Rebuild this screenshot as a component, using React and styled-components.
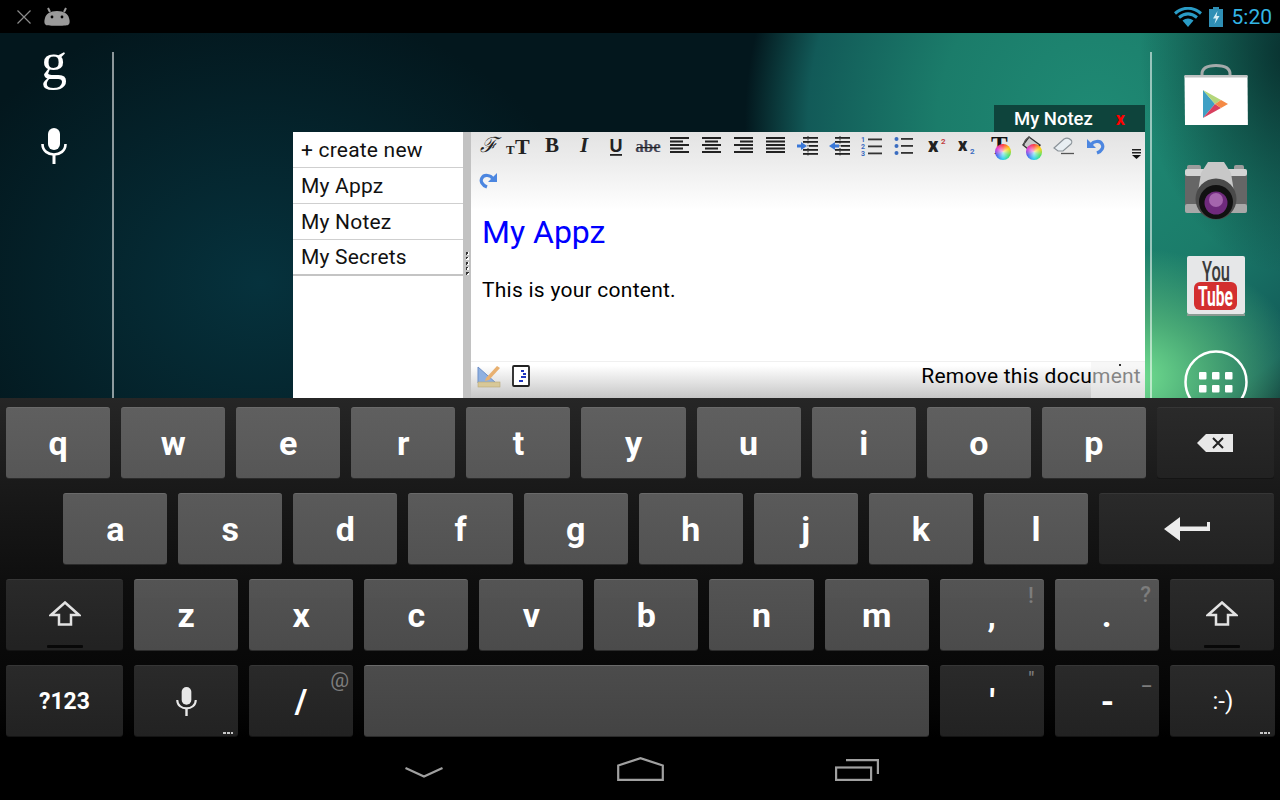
import React from "react";
import styled, { createGlobalStyle } from "styled-components";

const GlobalStyle = createGlobalStyle`
  html, body { margin: 0; padding: 0; background: #000; }
  body { font-family: Roboto, "Liberation Sans", sans-serif; }
`;

const Screen = styled.div`
  width: 1280px;
  height: 800px;
  display: flex;
  flex-direction: column;
  overflow: hidden;
`;

/* status bar */
const StatusBar = styled.div`
  height: 33px;
  background: #000;
  display: flex;
  align-items: center;
  padding: 0 8px 0 17px;
`;
const Time = styled.span`
  color: #33b5e5;
  font-size: 21px;
  margin-left: 9px;
`;
const Push = styled.div`
  flex: 1;
`;

/* desktop */
const Desktop = styled.div`
  position: relative;
  height: 365px;
  display: flex;
  overflow: hidden;
  background:
    radial-gradient(ellipse 175px 130px at 1130px 345px, rgba(116, 226, 146, 1) 0%, rgba(90, 190, 125, 0.75) 45%, rgba(60, 150, 110, 0) 100%),
    radial-gradient(ellipse 150px 220px at 1290px 20px, rgba(6, 38, 38, 0.85) 0%, rgba(6, 38, 38, 0) 100%),
    radial-gradient(ellipse 350px 370px at 1095px 90px, #1f8a74 0%, #1b7c6a 45%, #125a58 82%, rgba(8, 50, 56, 0) 100%),
    radial-gradient(ellipse 340px 280px at 260px 250px, #06323d 0%, rgba(6, 50, 61, 0) 100%),
    #03171d;
`;
const LeftRail = styled.div`
  width: 108px;
  margin-right: 4px;
  display: flex;
  flex-direction: column;
  align-items: center;
  padding-top: 1px;
`;
const GoogleG = styled.span`
  font-family: "Liberation Serif", serif;
  font-size: 52px;
  line-height: 56px;
  color: #fff;
  height: 94px;
`;
const Divider = styled.div`
  width: 2px;
  margin-top: 19px;
  background: rgba(255, 255, 255, 0.55);
`;
const Wallpaper = styled.div`
  flex: 1;
`;
const RightRail = styled.div`
  width: 128px;
  padding-top: 14.5px;
  display: flex;
  flex-direction: column;
`;
const RailSlot = styled.div`
  flex: 0 0 95.5px;
  display: flex;
  align-items: center;
  justify-content: center;
`;

/* notes window */
const NoteWindow = styled.div`
  position: absolute;
  left: 293px;
  top: 72px;
  width: 852px;
  bottom: 0;
  display: flex;
  flex-direction: column;
`;
const WindowTab = styled.div`
  align-self: flex-end;
  width: 151px;
  height: 27px;
  background: #0e443c;
  display: flex;
  align-items: center;
  padding-left: 20px;
  box-sizing: border-box;
  color: #fff;
  font-size: 18.5px;
  font-weight: 500;
`;
const CloseX = styled.span`
  color: #f00;
  font-weight: 700;
  font-size: 18px;
  margin-left: 23px;
`;
const WindowBody = styled.div`
  flex: 1;
  display: flex;
  min-height: 0;
`;
const ListPane = styled.div`
  width: 170px;
  background: #fff;
`;
const ListRow = styled.div`
  height: 36px;
  box-sizing: border-box;
  padding-left: 8px;
  display: flex;
  align-items: center;
  border-bottom: ${(p) => (p.$last ? "2px solid #c4c4c4" : "1px solid #cfcfcf")};
  font-size: 21px;
  letter-spacing: 0.2px;
  color: #111;
`;
const Splitter = styled.div`
  width: 8px;
  background: #c2c2c2;
  display: flex;
  flex-direction: column;
  align-items: center;
  gap: 2px;
  padding-top: 120px;
  box-sizing: border-box;
`;
const SplitDot = styled.i`
  width: 3px;
  height: 3px;
  background: linear-gradient(135deg, #333 50%, #fff 50%);
`;
const Editor = styled.div`
  flex: 1;
  display: flex;
  flex-direction: column;
  background: #fff;
  min-width: 0;
`;
const Toolbar = styled.div`
  height: 78px;
  box-sizing: border-box;
  padding-left: 1px;
  background: linear-gradient(#e3e3e3, #ededed 40%, #fff);
  display: flex;
  flex-direction: column;
  gap: 6px;
`;
const ToolRow = styled.div`
  display: flex;
  align-items: center;
  height: 28px;
`;
const ToolButton = styled.div`
  position: relative;
  width: 32px;
  height: 28px;
  display: flex;
  align-items: center;
  justify-content: center;
`;
const ColorWheel = styled.i`
  position: absolute;
  left: ${(p) => p.$left}px;
  top: 12px;
  width: 16px;
  height: 16px;
  border-radius: 50%;
  background:
    radial-gradient(circle, rgba(255, 255, 255, 0.75) 0%, rgba(255, 255, 255, 0) 70%),
    conic-gradient(#ff3030, #ffd000, #40e060, #20d0f0, #4060f0, #e030d0, #ff3030);
`;
const DropMark = styled.div`
  margin-left: 20px;
  margin-top: 14px;
`;
const Content = styled.div`
  flex: 1;
  padding-left: 11px;
`;
const DocTitle = styled.div`
  font-size: 32px;
  line-height: 44px;
  color: #00f;
`;
const DocText = styled.div`
  margin-top: 24px;
  font-size: 21px;
  line-height: 24px;
  color: #000;
  letter-spacing: 0.25px;
`;
const Footer = styled.div`
  position: relative;
  height: 37px;
  box-sizing: border-box;
  border-top: 1px solid #f0f0f0;
  background: linear-gradient(#fff 10%, #c6c6c6);
  display: flex;
  align-items: center;
  padding: 0 4px 8px 2px;
`;
const RemoveLink = styled.span`
  margin-left: auto;
  font-size: 21px;
  letter-spacing: 0.25px;
  color: #000;
`;
const FadeOver = styled.div`
  position: absolute;
  right: 0;
  top: 0;
  bottom: 0;
  width: 54px;
  background: rgba(240, 240, 240, 0.55);
`;
const ScrollTick = styled.i`
  position: absolute;
  right: 24px;
  top: 2px;
  width: 2px;
  height: 2px;
  background: #333;
`;

/* keyboard */
const Keyboard = styled.div`
  height: 340px;
  box-sizing: border-box;
  padding-top: 9px;
  background: linear-gradient(#262626, #1a1a1a 25%, #0e0e0e 55%, #050505 90%, #000);
  display: flex;
  flex-direction: column;
  gap: 15px;
`;
const KeyRow = styled.div`
  display: flex;
  gap: 11px;
  padding-left: ${(p) => p.$inset}px;
`;
const Key = styled.div`
  position: relative;
  flex: 0 0 ${(p) => p.$w}px;
  height: 71px;
  box-sizing: border-box;
  border-radius: 3px;
  display: flex;
  align-items: center;
  justify-content: center;
  color: #fff;
  font-size: ${(p) => p.$size || 34}px;
  font-weight: ${(p) => p.$weight || 700};
  background: linear-gradient(rgba(255, 255, 255, 0.03), rgba(0, 0, 0, 0.04)), ${(p) => (p.$dark ? "#232323" : p.$tone)};
  border-top: 1px solid ${(p) => (p.$dark ? "#363636" : "#6a6a6a")};
  box-shadow: 0 1px 0 ${(p) => (p.$dark ? "#141414" : "#2b2b2b")};
`;
const Hint = styled.span`
  position: absolute;
  top: ${(p) => p.$top}px;
  right: ${(p) => p.$right}px;
  color: #7d7d7d;
  font-size: ${(p) => p.$size || 22}px;
  line-height: 1;
  font-weight: ${(p) => p.$weight || 500};
`;
const ShiftBar = styled.i`
  position: absolute;
  left: 50%;
  bottom: 2px;
  width: 36px;
  height: 3px;
  margin-left: -18px;
  border-radius: 1px;
  background: #080808;
`;
const MoreDots = styled.i`
  position: absolute;
  right: 5px;
  bottom: 2px;
  width: 10px;
  height: 2px;
  background: repeating-linear-gradient(90deg, #c8c8c8 0 3px, transparent 3px 4px);
`;

/* nav bar */
const NavBar = styled.div`
  flex: 1;
  background: #000;
  display: flex;
  justify-content: center;
  align-items: center;
  padding-bottom: 1px;
`;
const NavButton = styled.div`
  width: 216px;
  display: flex;
  justify-content: center;
  margin-top: ${(p) => p.$drop || 0}px;
  padding-left: ${(p) => p.$nudge || 0}px;
  box-sizing: border-box;
`;

/* drawings */
const AndroidHead = () => (
  <svg width="26" height="20" viewBox="0 0 26 20" style={{ marginLeft: 13 }}>
    <path d="M2 18c-2-1-2-4-1-7 1-4 5-7 12-7s11 3 12 7c1 3 1 6-1 7-2 1-20 1-22 0z" fill="#9a9a9a" />
    <path d="M6 5 4 1M20 5l2-4" stroke="#9a9a9a" strokeWidth="2" />
    <circle cx="8" cy="10" r="1.4" fill="#000" />
    <circle cx="18" cy="10" r="1.4" fill="#000" />
  </svg>
);

const CloseMark = () => (
  <svg width="14" height="14" viewBox="0 0 14 14">
    <path d="M0.5 0.5 13.5 13.5M13.5 0.5 0.5 13.5" stroke="#8c8c8c" strokeWidth="1.2" />
  </svg>
);

const Wifi = () => (
  <svg width="28" height="20" viewBox="0 0 28 20">
    <g fill="none" stroke="#2a9cc6" strokeWidth="3">
      <path d="M1 6.5c8-7 18-7 26 0" />
      <path d="M5 10.5c6-4.800 12-4.800 18 0" />
    </g>
    <path d="M8.500 13.500c3.500-2.800 7.500-2.800 11 0L14 20z" fill="#2a9cc6" />
  </svg>
);

const Battery = () => (
  <svg width="14" height="20" viewBox="0 0 14 20" style={{ marginLeft: 7 }}>
    <path d="M4 0h6v2h4v18H0V2h4z" fill="#2f8fb5" />
    <path d="M8.500 4 4 11.500h3L5.500 17 10.500 9H7.500z" fill="#d8eef6" />
  </svg>
);

const PlayBag = () => (
  <svg width="64" height="62" viewBox="0 0 64 62">
    <path d="M18 16V10C18 3 24 1.500 32 1.500S46 3 46 10v6" fill="none" stroke="#a4aaaa" strokeWidth="3" />
    <path d="M0.500 12h63l.4 49H1z" fill="#fff" />
    <rect x="0.500" y="11" width="63" height="2.500" fill="#bfc2c2" />
    <path d="M19 26v28l12-14z" fill="#3fa0c4" />
    <path d="M19 26 37 36l-6 4z" fill="#b4d67a" />
    <path d="M19 54 37 44l-6-4z" fill="#d8405f" />
    <path d="M37 36 44 40l-7 4-6-4z" fill="#f58a45" />
  </svg>
);

const Camera = () => (
  <svg width="64" height="58" viewBox="0 0 64 58">
    <rect x="3" y="3" width="14" height="6" rx="2" fill="#9c9c9c" />
    <rect x="50" y="3" width="10" height="6" rx="2" fill="#9c9c9c" />
    <rect x="1" y="7" width="62" height="44" rx="3" fill="#666" />
    <rect x="1" y="7" width="62" height="7" rx="2" fill="#d4d4d4" />
    <rect x="1" y="42" width="62" height="9" rx="2" fill="#a8a8a8" />
    <path d="M24 0h16l7 11 4 25H13l4-25z" fill="#c8c8c8" />
    <circle cx="32" cy="37" r="20.500" fill="#4a4a4a" />
    <circle cx="32" cy="40" r="17" fill="#111" />
    <circle cx="32" cy="41" r="11.500" fill="#6f2a7c" />
    <circle cx="32" cy="38" r="7" fill="#a565ad" />
  </svg>
);

const YouTube = () => (
  <svg width="60" height="60" viewBox="0 0 60 60">
    <rect x="1" y="0" width="58" height="58" rx="2" fill="#e6e7e8" />
    <rect x="1" y="58" width="58" height="2" fill="#8b9a92" />
    <text x="30" y="25" textAnchor="middle" fontFamily="Roboto, sans-serif" fontWeight="500" fontSize="27" fill="#3a3a3a" textLength="28" lengthAdjust="spacingAndGlyphs">You</text>
    <rect x="8" y="26" width="43" height="28" rx="6" fill="#d32f2f" />
    <text x="29.500" y="50" textAnchor="middle" fontFamily="Roboto, sans-serif" fontWeight="700" fontSize="27" fill="#fff" textLength="35" lengthAdjust="spacingAndGlyphs">Tube</text>
  </svg>
);

const AppsButton = () => (
  <svg width="64" height="64" viewBox="0 0 64 64">
    <circle cx="32" cy="32" r="30.500" fill="none" stroke="#fff" strokeWidth="2.500" />
    {[15, 28, 41].map((x) =>
      [22, 35].map((y) => <rect key={`${x}-${y}`} x={x} y={y} width="7.500" height="7.500" rx="1" fill="#fff" />)
    )}
  </svg>
);

const MicGlyph = ({ w = 26, h = 36, color = "#fff" }) => (
  <svg width={w} height={h} viewBox="0 0 26 36">
    <rect x="7" y="0" width="12" height="22" rx="6" fill={color} />
    <path d="M1.500 16c0 14 23 14 23 0" fill="none" stroke={color} strokeWidth="2.600" />
    <rect x="11.500" y="26" width="3" height="10" fill={color} />
  </svg>
);

const Lines = ({ rows }) => (
  <svg width="20" height="18" viewBox="0 0 20 18">
    {rows.map(([x, w], i) => (
      <rect key={i} x={x} y={i * 3.500} width={w} height="2" fill="#222" />
    ))}
  </svg>
);

const IndentIcon = ({ flip }) => (
  <svg width="24" height="20" viewBox="0 0 24 20">
    <path d="M12 0v20" stroke="#333" strokeWidth="1" strokeDasharray="1.500 1.500" />
    {[2, 6, 10, 14, 18].map((y, i) => (
      <rect key={y} x={i === 2 ? 13 : 7} y={y - 1} width={i === 2 ? 9 : 15} height="1.800" fill="#222" />
    ))}
    <path d={flip ? "M1 10 7 6v2.500h4v3H7V14z" : "M11 10 5 6v2.500H1v3h4V14z"} fill="#3a78d8" />
  </svg>
);

const NumberList = () => (
  <svg width="22" height="20" viewBox="0 0 22 20">
    {["1", "2", "3"].map((n, i) => (
      <g key={n}>
        <text x="0" y={6 + i * 7} fontSize="7" fontWeight="700" fontFamily="Roboto, sans-serif" fill="#3a6cc0">{n}</text>
        <rect x="7" y={2.500 + i * 7} width="14" height="1.800" fill="#333" />
      </g>
    ))}
  </svg>
);

const BulletList = () => (
  <svg width="20" height="20" viewBox="0 0 20 20">
    {[3, 10, 17].map((y) => (
      <g key={y}>
        <circle cx="2.500" cy={y} r="2" fill="#3a6cc0" />
        <rect x="7" y={y - 1} width="12" height="1.800" fill="#333" />
      </g>
    ))}
  </svg>
);

const ScriptIcon = ({ mark, color, x, markX, markY, size, base }) => (
  <svg width="24" height="20" viewBox="0 0 24 20">
    <text x={x} y={base} fontSize={size} fontWeight="900" fontFamily="Roboto, sans-serif" fill="#222">x</text>
    <text x={markX} y={markY} fontSize="8" fontWeight="700" fontFamily="Roboto, sans-serif" fill={color}>{mark}</text>
  </svg>
);

const TextColor = () => (
  <>
    <svg width="22" height="24" viewBox="0 0 22 24">
      <text x="2" y="20" fontSize="25" fontWeight="700" fontFamily='"Liberation Serif", serif' fill="#111">T</text>
    </svg>
    <ColorWheel $left={11} />
  </>
);

const FillColor = () => (
  <>
    <svg width="24" height="24" viewBox="0 0 24 24">
      <path d="M9 3 20 11l-7 8L3 11z" fill="#c9c9c9" stroke="#333" strokeWidth="1.400" />
      <path d="M4 11c0-4 3-7 6-8" fill="none" stroke="#555" strokeWidth="1.300" />
    </svg>
    <ColorWheel $left={10} />
  </>
);

const Eraser = () => (
  <svg width="22" height="18" viewBox="0 0 22 18">
    <path d="M1 11 11 2c2-1 5-1 7 1 1 1 1 3 0 4l-8 7H5z" fill="#e8eef2" stroke="#8a9298" strokeWidth="1.200" />
    <path d="M8 16.500h13" stroke="#555" strokeWidth="1.300" />
  </svg>
);

const CurveArrow = ({ flip }) => (
  <svg width="18" height="18" viewBox="0 0 18 18" style={flip ? { transform: "scaleX(-1)" } : undefined}>
    <path d="M4 8c2-4 9-5 11-1 2 3 0 7-5 9" fill="none" stroke="#4c86e0" strokeWidth="3.200" />
    <path d="M0 2v9h9z" fill="#4c86e0" />
  </svg>
);

const DropDown = () => (
  <svg width="9" height="10" viewBox="0 0 9 10">
    <rect x="0" y="0" width="9" height="1.500" fill="#222" />
    <rect x="0" y="3" width="9" height="1.500" fill="#222" />
    <path d="M0 6h9L4.500 10z" fill="#111" />
  </svg>
);

const RulerPencil = () => (
  <svg width="24" height="24" viewBox="0 0 24 24">
    <path d="M1 3v16h18z" fill="#8fb0e0" stroke="#6d8fc8" strokeWidth="1" />
    <path d="M9 14 20 2l3 2-11 12-4 1z" fill="#e8b070" />
    <rect x="1" y="18" width="22" height="5" fill="#d8c898" stroke="#b8a878" strokeWidth="0.600" />
  </svg>
);

const Outline = () => (
  <svg width="18" height="22" viewBox="0 0 18 22">
    <rect x="1" y="1" width="16" height="20" rx="1" fill="#fff" stroke="#222" strokeWidth="1.800" />
    <path d="M9 6h3M11 9h3M9 12h5M7 16h4" stroke="#1f35c0" strokeWidth="1.800" />
  </svg>
);

const ShiftArrow = () => (
  <svg width="32" height="25" viewBox="0 0 32 25" style={{ marginTop: -3 }}>
    <path d="M16 1.500 30 14h-8v9.500H10V14H2z" fill="none" stroke="#e2e2e2" strokeWidth="2.500" />
  </svg>
);

const Backspace = () => (
  <svg width="36" height="18" viewBox="0 0 36 18">
    <path d="M9 0h27v18H9L0 9z" fill="#e8e8e8" />
    <path d="M16 4l10 10M26 4 16 14" stroke="#222" strokeWidth="2" />
  </svg>
);

const EnterArrow = () => (
  <svg width="46" height="24" viewBox="0 0 46 24">
    <path d="M16 0V9.500H43V5h3v9H16v10L0 12z" fill="#ececec" />
  </svg>
);

const BackIcon = () => (
  <svg width="38" height="11" viewBox="0 0 38 11">
    <path d="M0.500 1 19 9.500 37.500 1" fill="none" stroke="#a0a0a0" strokeWidth="2.200" />
  </svg>
);
const HomeIcon = () => (
  <svg width="47" height="24" viewBox="0 0 47 24">
    <path d="M1.200 8.500 23.500 1.200 45.800 8.500V22.800H1.200z" fill="none" stroke="#a0a0a0" strokeWidth="2.200" />
  </svg>
);
const RecentsIcon = () => (
  <svg width="44" height="22" viewBox="0 0 44 22">
    <rect x="1.100" y="8.500" width="35" height="12.400" fill="none" stroke="#a0a0a0" strokeWidth="2.200" />
    <path d="M11 1.100h31.900V15" fill="none" stroke="#a0a0a0" strokeWidth="2.200" />
  </svg>
);

const align = {
  left: [[0, 19], [0, 13], [0, 19], [0, 13], [0, 19]],
  center: [[0, 19], [3, 13], [0, 19], [3, 13], [0, 19]],
  right: [[0, 19], [6, 13], [0, 19], [6, 13], [0, 19]],
  full: [[0, 19], [0, 19], [0, 19], [0, 19], [0, 19]],
};

const TextTool = ({ children, size, italic, weight, line, strike, color = "#222", family }) => (
  <svg width="30" height="26" viewBox="0 0 30 26">
    <text
      x="15"
      y="19"
      textAnchor="middle"
      fontSize={size}
      fontStyle={italic ? "italic" : "normal"}
      fontWeight={weight || 700}
      fontFamily={family || '"Liberation Serif", serif'}
      fill={color}
    >
      {children}
    </text>
    {line && <rect x="9" y="21" width="12" height="1.800" fill="#222" />}
    {strike && <rect x="4" y="14" width="22" height="1.200" fill="#222" />}
  </svg>
);

const toolIcons = [
  <TextTool key="font" size="21" italic weight="400" family='"DejaVu Serif", "Liberation Serif", serif'>ℱ</TextTool>,
  <svg key="size" width="30" height="26" viewBox="0 0 30 26">
    <text x="1" y="21" fontSize="13" fontWeight="700" fontFamily='"Liberation Serif", serif' fill="#222">T</text>
    <text x="10" y="21" fontSize="22" fontWeight="700" fontFamily='"Liberation Serif", serif' fill="#222">T</text>
  </svg>,
  <TextTool key="b" size="21" weight="700">B</TextTool>,
  <TextTool key="i" size="21" italic>I</TextTool>,
  <TextTool key="u" size="18" line family="Liberation Sans, sans-serif">U</TextTool>,
  <TextTool key="s" size="17" strike color="#445">abe</TextTool>,
  <Lines key="al" rows={align.left} />,
  <Lines key="ac" rows={align.center} />,
  <Lines key="ar" rows={align.right} />,
  <Lines key="af" rows={align.full} />,
  <IndentIcon key="in" />,
  <IndentIcon key="out" flip />,
  <NumberList key="ol" />,
  <BulletList key="ul" />,
  <ScriptIcon key="sup" mark="2" color="#c04040" x={4} base={16} size={20} markX={17} markY={8} />,
  <ScriptIcon key="sub" mark="2" color="#3a6cc0" x={2} base={15} size={18} markX={14} markY={18} />,
  <TextColor key="tc" />,
  <FillColor key="fc" />,
  <Eraser key="er" />,
  <CurveArrow key="un" />,
];

const tones = ["#5a5a5a", "#555555", "#4e4e4e", "#464646"];

const lettersRow = (str, tone) =>
  str.split("").map((c) => (
    <Key key={c} $w={104.1} $tone={tone}>{c}</Key>
  ));

export default function App() {
  return (
    <Screen>
      <GlobalStyle />
      <StatusBar>
        <CloseMark />
        <AndroidHead />
        <Push />
        <Wifi />
        <Battery />
        <Time>5:20</Time>
      </StatusBar>

      <Desktop>
        <LeftRail>
          <GoogleG>g</GoogleG>
          <MicGlyph />
        </LeftRail>
        <Divider />
        <Wallpaper />
        <Divider />
        <RightRail>
          <RailSlot><PlayBag /></RailSlot>
          <RailSlot><Camera /></RailSlot>
          <RailSlot><YouTube /></RailSlot>
          <RailSlot><AppsButton /></RailSlot>
        </RightRail>

        <NoteWindow>
          <WindowTab>
            My Notez
            <CloseX>x</CloseX>
          </WindowTab>
          <WindowBody>
            <ListPane>
              <ListRow>+ create new</ListRow>
              <ListRow>My Appz</ListRow>
              <ListRow>My Notez</ListRow>
              <ListRow $last>My Secrets</ListRow>
            </ListPane>
            <Splitter>
              {[0, 1, 2, 3, 4].map((i) => <SplitDot key={i} />)}
            </Splitter>
            <Editor>
              <Toolbar>
                <ToolRow>
                  {toolIcons.map((icon) => <ToolButton key={icon.key}>{icon}</ToolButton>)}
                  <DropMark><DropDown /></DropMark>
                </ToolRow>
                <ToolRow>
                  <ToolButton><CurveArrow flip /></ToolButton>
                </ToolRow>
              </Toolbar>
              <Content>
                <DocTitle>My Appz</DocTitle>
                <DocText>This is your content.</DocText>
              </Content>
              <Footer>
                <ToolButton><RulerPencil /></ToolButton>
                <ToolButton><Outline /></ToolButton>
                <RemoveLink>Remove this document</RemoveLink>
                <FadeOver><ScrollTick /></FadeOver>
              </Footer>
            </Editor>
          </WindowBody>
        </NoteWindow>
      </Desktop>

      <Keyboard>
        <KeyRow $inset={6}>
          {lettersRow("qwertyuiop", tones[0])}
          <Key $w={117} $dark><Backspace /></Key>
        </KeyRow>
        <KeyRow $inset={63.2}>
          {lettersRow("asdfghjkl", tones[1])}
          <Key $w={175} $dark><EnterArrow /></Key>
        </KeyRow>
        <KeyRow $inset={6}>
          <Key $w={117} $dark><ShiftArrow /><ShiftBar /></Key>
          {lettersRow("zxcvbnm", tones[2])}
          <Key $w={104.1} $tone={tones[2]}>,<Hint $top={5} $right={10}>!</Hint></Key>
          <Key $w={104.1} $tone={tones[2]}>.<Hint $top={4} $right={8}>?</Hint></Key>
          <Key $w={104.1} $dark><ShiftArrow /><ShiftBar /></Key>
        </KeyRow>
        <KeyRow $inset={6}>
          <Key $w={117} $dark $size={23}>?123</Key>
          <Key $w={104.1} $dark><MicGlyph w={21} h={29} color="#e8e8e8" /><MoreDots /></Key>
          <Key $w={104.1} $dark>/<Hint $top={4} $right={4} $size={21} $weight={400}>@</Hint></Key>
          <Key $w={565} $tone={tones[3]} />
          <Key $w={104.1} $dark>'<Hint $top={4} $right={10} $size={18}>"</Hint></Key>
          <Key $w={104.1} $dark>-<Hint $top={12} $right={7} $size={18}>–</Hint></Key>
          <Key $w={105} $dark $size={24} $weight={400}>:-)<MoreDots /></Key>
        </KeyRow>
      </Keyboard>

      <NavBar>
        <NavButton $drop={8}><BackIcon /></NavButton>
        <NavButton><HomeIcon /></NavButton>
        <NavButton $drop={2} $nudge={2}><RecentsIcon /></NavButton>
      </NavBar>
    </Screen>
  );
}
